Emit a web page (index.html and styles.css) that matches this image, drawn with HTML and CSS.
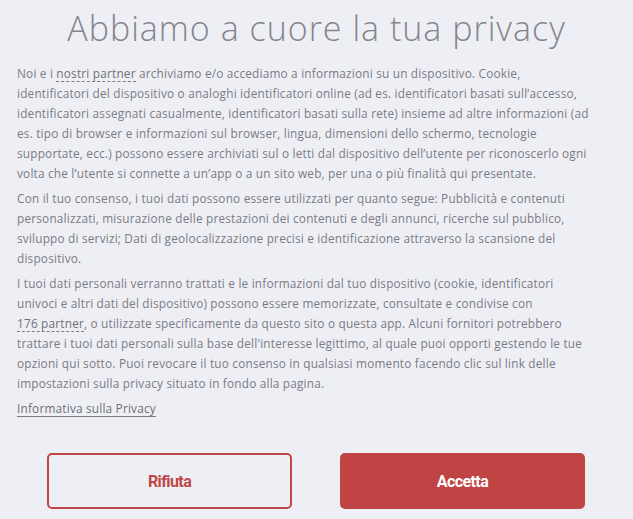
FILE: index.html
```html
<!DOCTYPE html>
<html lang="it">
<head>
<meta charset="utf-8">
<link rel="stylesheet" href="styles.css">
</head>
<body>
<div class="dialog">
  <h1 class="title">Abbiamo a cuore la tua privacy</h1>
  <div class="content">
    <p>Noi e i <a class="dotted" href="#">nostri partner</a> archiviamo e/o accediamo a informazioni su un dispositivo. Cookie,<br>identificatori del dispositivo o analoghi identificatori online (ad es. identificatori basati sull’accesso,<br>identificatori assegnati casualmente, identificatori basati sulla rete) insieme ad altre informazioni (ad<br>es. tipo di browser e informazioni sul browser, lingua, dimensioni dello schermo, tecnologie<br>supportate, ecc.) possono essere archiviati sul o letti dal dispositivo dell’utente per riconoscerlo ogni<br>volta che l’utente si connette a un’app o a un sito web, per una o più finalità qui presentate.</p>
    <p>Con il tuo consenso, i tuoi dati possono essere utilizzati per quanto segue: Pubblicità e contenuti<br>personalizzati, misurazione delle prestazioni dei contenuti e degli annunci, ricerche sul pubblico,<br>sviluppo di servizi; Dati di geolocalizzazione precisi e identificazione attraverso la scansione del<br>dispositivo.</p>
    <p>I tuoi dati personali verranno trattati e le informazioni dal tuo dispositivo (cookie, identificatori<br>univoci e altri dati del dispositivo) possono essere memorizzate, consultate e condivise con<br><a class="dotted" href="#">176 partner</a>, o utilizzate specificamente da questo sito o questa app. Alcuni fornitori potrebbero<br>trattare i tuoi dati personali sulla base dell'interesse legittimo, al quale puoi opporti gestendo le tue<br>opzioni qui sotto. Puoi revocare il tuo consenso in qualsiasi momento facendo clic sul link delle<br>impostazioni sulla privacy situato in fondo alla pagina.</p>
    <p class="policy"><a class="solid" href="#">Informativa sulla Privacy</a></p>
  </div>
  <div class="actions">
    <button class="btn btn-outline">Rifiuta</button>
    <button class="btn btn-fill">Accetta</button>
  </div>
</div>
</body>
</html>
```
FILE: styles.css
```css
html, body {
  margin: 0;
  padding: 0;
  background: #eeeff4;
}
.dialog {
  width: 633px;
  height: 519px;
  box-sizing: border-box;
  padding: 0 17px;
  display: flex;
  flex-direction: column;
}
.title {
  margin: 6px 0 0;
  text-align: center;
  font-family: "Open Sans", sans-serif;
  font-weight: 300;
  font-size: 34px;
  letter-spacing: 1px;
  line-height: 44px;
  color: #85858f;
}
.content {
  margin-top: 13px;
  font-family: "Open Sans", sans-serif;
  font-size: 11.8px;
  letter-spacing: 0.2px;
  line-height: 20px;
  color: #7b7b84;
  white-space: nowrap;
}
.content p {
  margin: 0 0 5px;
}
.content a {
  color: #6f6f78;
  text-decoration: none;
}
.dotted {
  border-bottom: 1px dashed #7b7b84;
}
.solid {
  border-bottom: 1px solid #7b7b84;
}
.actions {
  margin-top: auto;
  margin-bottom: 10px;
  padding: 0 31px 0 30px;
  display: flex;
  justify-content: space-between;
}
.btn {
  width: 245px;
  height: 56px;
  box-sizing: border-box;
  border-radius: 5px;
  font-family: "Roboto", sans-serif;
  font-weight: 700;
  font-size: 16px;
  letter-spacing: -0.6px;
  cursor: pointer;
}
.btn-outline {
  background: transparent;
  border: 2px solid #c04646;
  color: #c04646;
}
.btn-fill {
  background: #c14444;
  border: 2px solid #c14444;
  color: #ffffff;
}
```
